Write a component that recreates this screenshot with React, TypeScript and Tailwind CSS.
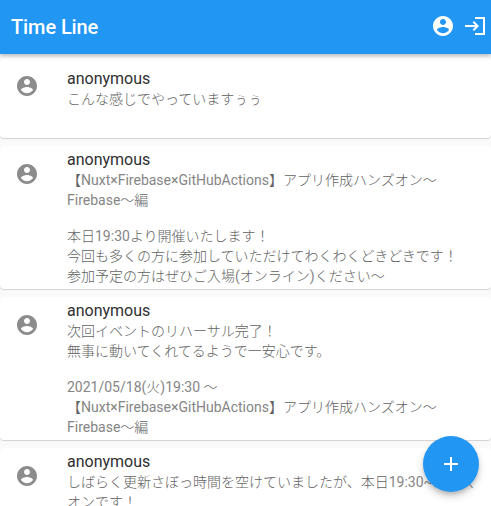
import React from "react";

const posts: { lines: string[]; height: string; pad: string }[] = [
  { lines: ["こんな感じでやっていますぅぅ"], height: "h-[80px]", pad: "pt-[11px]" },
  {
    lines: [
      "【Nuxt×Firebase×GitHubActions】アプリ作成ハンズオン〜",
      "Firebase〜編",
      "",
      "本日19:30より開催いたします！",
      "今回も多くの方に参加していただけてわくわくどきどきです！",
      "参加予定の方はぜひご入場(オンライン)ください〜",
    ],
    height: "h-[143px]",
    pad: "pt-1",
  },
  {
    lines: [
      "次回イベントのリハーサル完了！",
      "無事に動いてくれてるようで一安心です。",
      "",
      "2021/05/18(火)19:30 〜",
      "【Nuxt×Firebase×GitHubActions】アプリ作成ハンズオン〜",
      "Firebase〜編",
    ],
    height: "h-[143px]",
    pad: "pt-1",
  },
  {
    lines: ["しばらく更新さぼっ時間を空けていましたが、本日19:30~ハンズ", "オンです！"],
    height: "h-[143px]",
    pad: "pt-1",
  },
];

const ACCOUNT =
  "M12 2C6.48 2 2 6.48 2 12s4.48 10 10 10 10-4.48 10-10S17.52 2 12 2zm0 3c1.66 0 3 1.34 3 3s-1.34 3-3 3-3-1.34-3-3 1.34-3 3-3zm0 14.2c-2.5 0-4.71-1.28-6-3.22.03-1.99 4-3.08 6-3.08 1.99 0 5.97 1.09 6 3.08-1.29 1.94-3.5 3.22-6 3.22z";

function AccountIcon({ className }: { className: string }) {
  return (
    <svg viewBox="0 0 24 24" className={className} fill="currentColor">
      <path d={ACCOUNT} />
    </svg>
  );
}

// Latin runs use the regular face, Japanese runs the light one.
function Mixed({ text }: { text: string }) {
  const runs = text.split(/([\x20-\x7e×]+)/).filter(Boolean);
  return (
    <>
      {runs.map((run, i) => (
        <span
          key={i}
          className={/^[\x20-\x7e×]/.test(run) ? "font-normal text-[#858585]" : "font-light text-[#626262]"}
        >
          {run}
        </span>
      ))}
    </>
  );
}

export default function App() {
  return (
    <div className="relative flex h-[506px] w-full flex-col overflow-hidden bg-[#fafafa] font-['Roboto','Noto_Sans_CJK_JP',sans-serif]">
      <header className="z-10 flex h-[54px] shrink-0 items-center justify-between bg-[#2196f3] pl-[11px] pr-1 text-white shadow-[0_2px_4px_rgba(0,0,0,0.25)]">
        <h1 className="text-[20px] leading-6 font-medium tracking-[-0.1px]">Time Line</h1>
        <div className="flex items-center gap-2 pb-[2px]">
          <AccountIcon className="size-6" />
          <svg viewBox="0 0 24 24" className="size-6" fill="currentColor">
            <path d="M11 7 9.6 8.4l2.6 2.6H2v2h10.2l-2.6 2.6L11 17l5-5zM12 3h10v18H12v-2h8V5h-8z" />
          </svg>
        </div>
      </header>
      <main className="flex flex-col gap-2 pt-1">
        {posts.map((post, i) => (
          <article
            key={i}
            className={`flex shrink-0 rounded bg-white shadow-[0_1px_1px_rgba(0,0,0,0.16)] ${post.height}`}
          >
            <AccountIcon className="mt-4 ml-[15px] size-6 shrink-0 text-[#8c8c8c]" />
            <div className={`ml-7 ${post.pad}`}>
              <h2 className="text-[16px] leading-[19px] text-[#303030]">anonymous</h2>
              <div className="pt-px text-[14px]">
                {post.lines.map((line, j) => (
                  <p key={j} className={`whitespace-pre ${line ? "h-5 leading-5" : "h-4"}`}>
                    <Mixed text={line} />
                  </p>
                ))}
              </div>
            </div>
          </article>
        ))}
      </main>
      <button
        aria-label="Add"
        className="absolute bottom-[14px] right-3 flex size-14 items-center justify-center rounded-full bg-[#2196f3] text-white shadow-[0_3px_5px_-1px_rgba(0,0,0,0.2),0_5px_8px_rgba(0,0,0,0.14)]"
      >
        <svg viewBox="0 0 24 24" className="size-6" fill="currentColor">
          <path d="M19 13h-6v6h-2v-6H5v-2h6V5h2v6h6v2z" />
        </svg>
      </button>
    </div>
  );
}
